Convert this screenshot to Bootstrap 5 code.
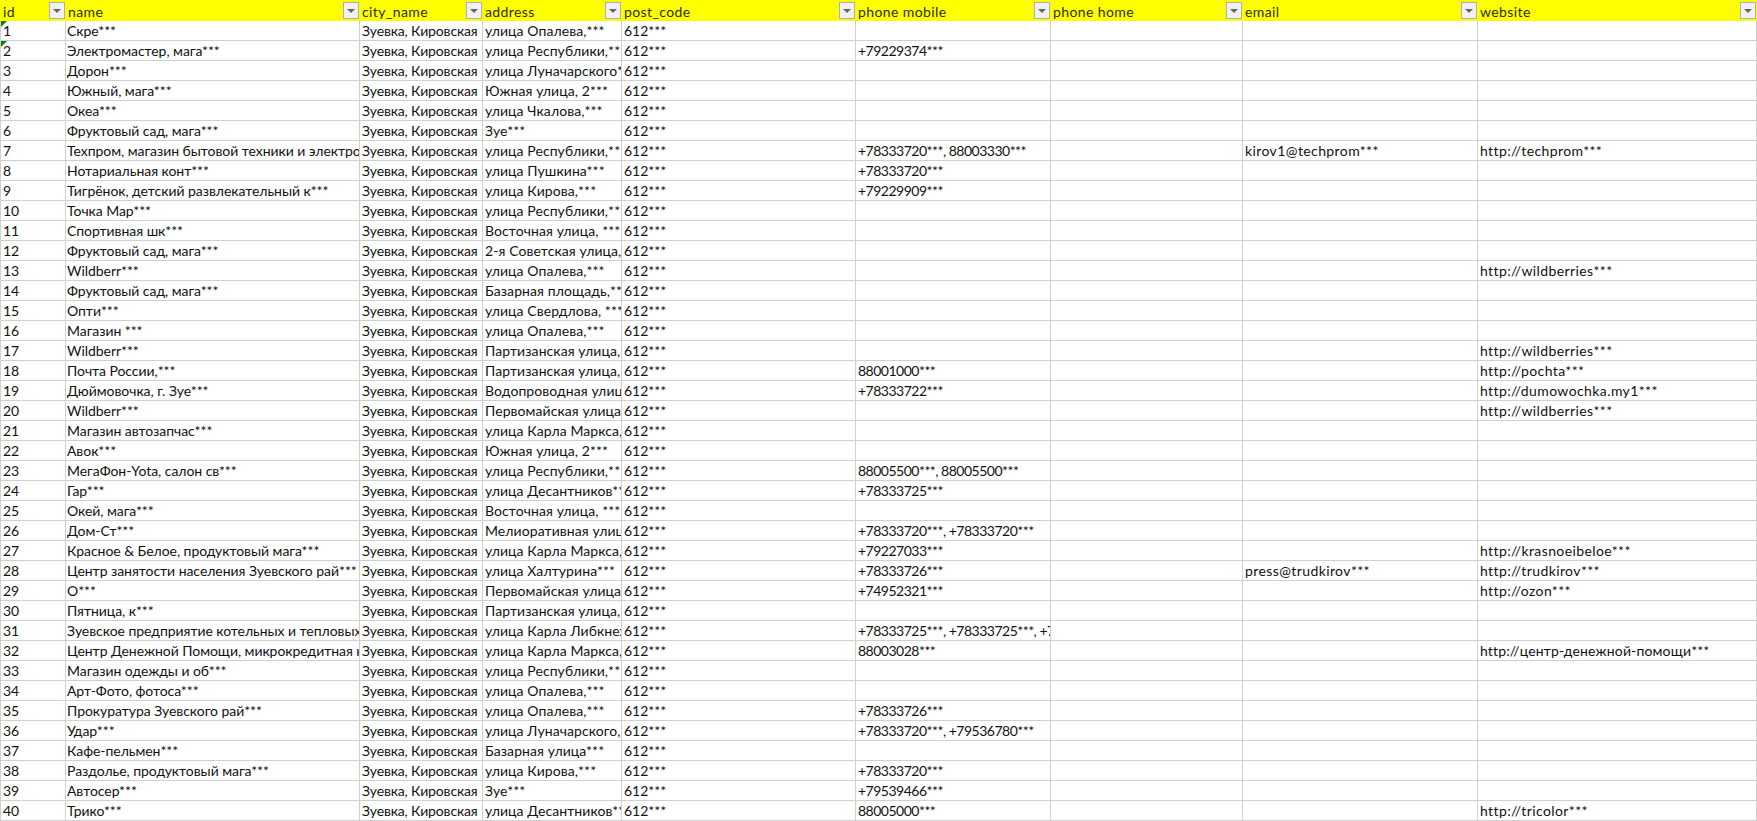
<!DOCTYPE html>
<html lang="ru">
<head>
<meta charset="utf-8">
<title>Sheet</title>
<link href="https://cdn.jsdelivr.net/npm/bootstrap@5.3.0/dist/css/bootstrap.min.css" rel="stylesheet">
<style>
html,body{margin:0;background:#fff;overflow:hidden}
.sheet{table-layout:fixed;width:1757px;border-collapse:separate;border-spacing:0;margin:0;font-family:"Lato","Noto Sans",sans-serif;font-size:14px;color:#111;--bs-table-bg:transparent;--bs-table-border-color:transparent}
.sheet th,.sheet td{padding:0 0 0 2px;height:20px;line-height:19px;white-space:nowrap;overflow:hidden;border:0;border-right:1px solid #d0d0d0;border-bottom:1px solid #d0d0d0;font-weight:400;box-shadow:none;color:#111}
.sheet thead th{background:#ff0;border-right:0;border-bottom:0;position:relative;height:21px;padding-left:3px;color:#2e2e00;letter-spacing:.4px}
.sheet thead th:nth-child(n+2){padding-left:2px}
.sheet td:first-child{border-left:1px solid #d0d0d0}
.sheet td:nth-child(2){padding-left:1px;letter-spacing:-.05px}
.sheet td:nth-child(3){letter-spacing:-.15px}
.sheet td:nth-child(4){letter-spacing:.08px}
.sheet td:nth-child(6){letter-spacing:-.5px}
.sheet td:nth-child(8),.sheet td:nth-child(9){letter-spacing:.4px}
.sheet td.mixed{letter-spacing:.15px}
.w1{width:66px}.w2{width:294px}.w3{width:123px}.w4{width:139px}.w5{width:234px}.w6{width:195px}.w7{width:192px}.w8{width:235px}.w9{width:279px}
.fbtn{position:absolute;right:1px;top:2px;width:16px;height:17px;border:1px solid #a8afc0;background:#f1f1f1;display:flex;align-items:center;justify-content:center;padding:0}
.fbtn::after{content:"";border-left:4px solid transparent;border-right:4px solid transparent;border-top:4px solid #666}
.flag{position:relative}
.flag::before{content:"";position:absolute;left:0;top:0;border-top:6px solid #107c10;border-right:6px solid transparent}
</style>
</head>
<body>
<table class="table sheet">
<colgroup><col class="w1"><col class="w2"><col class="w3"><col class="w4"><col class="w5"><col class="w6"><col class="w7"><col class="w8"><col class="w9"></colgroup>
<thead><tr>
<th>id<span class="fbtn"></span></th><th>name<span class="fbtn"></span></th><th>city_name<span class="fbtn"></span></th><th>address<span class="fbtn"></span></th><th>post_code<span class="fbtn"></span></th><th>phone mobile<span class="fbtn"></span></th><th>phone home<span class="fbtn"></span></th><th>email<span class="fbtn"></span></th><th>website<span class="fbtn"></span></th>
</tr></thead>
<tbody>
<tr><td class="flag">1</td><td>Скре***</td><td>Зуевка, Кировская</td><td>улица Опалева,***</td><td>612***</td><td></td><td></td><td></td><td></td></tr>
<tr><td class="flag">2</td><td>Электромастер, мага***</td><td>Зуевка, Кировская</td><td>улица Республики,***</td><td>612***</td><td>+79229374***</td><td></td><td></td><td></td></tr>
<tr><td>3</td><td>Дорон***</td><td>Зуевка, Кировская</td><td>улица Луначарского***</td><td>612***</td><td></td><td></td><td></td><td></td></tr>
<tr><td>4</td><td>Южный, мага***</td><td>Зуевка, Кировская</td><td>Южная улица, 2***</td><td>612***</td><td></td><td></td><td></td><td></td></tr>
<tr><td>5</td><td>Океа***</td><td>Зуевка, Кировская</td><td>улица Чкалова,***</td><td>612***</td><td></td><td></td><td></td><td></td></tr>
<tr><td>6</td><td>Фруктовый сад, мага***</td><td>Зуевка, Кировская</td><td>Зуе***</td><td>612***</td><td></td><td></td><td></td><td></td></tr>
<tr><td>7</td><td>Техпром, магазин бытовой техники и электроники</td><td>Зуевка, Кировская</td><td>улица Республики,***</td><td>612***</td><td>+78333720***, 88003330***</td><td></td><td>kirov1@techprom***</td><td>http://techprom***</td></tr>
<tr><td>8</td><td>Нотариальная конт***</td><td>Зуевка, Кировская</td><td>улица Пушкина***</td><td>612***</td><td>+78333720***</td><td></td><td></td><td></td></tr>
<tr><td>9</td><td>Тигрёнок, детский развлекательный к***</td><td>Зуевка, Кировская</td><td>улица Кирова,***</td><td>612***</td><td>+79229909***</td><td></td><td></td><td></td></tr>
<tr><td>10</td><td>Точка Мар***</td><td>Зуевка, Кировская</td><td>улица Республики,***</td><td>612***</td><td></td><td></td><td></td><td></td></tr>
<tr><td>11</td><td>Спортивная шк***</td><td>Зуевка, Кировская</td><td>Восточная улица, ***</td><td>612***</td><td></td><td></td><td></td><td></td></tr>
<tr><td>12</td><td>Фруктовый сад, мага***</td><td>Зуевка, Кировская</td><td>2-я Советская улица,***</td><td>612***</td><td></td><td></td><td></td><td></td></tr>
<tr><td>13</td><td>Wildberr***</td><td>Зуевка, Кировская</td><td>улица Опалева,***</td><td>612***</td><td></td><td></td><td></td><td>http://wildberries***</td></tr>
<tr><td>14</td><td>Фруктовый сад, мага***</td><td>Зуевка, Кировская</td><td>Базарная площадь,***</td><td>612***</td><td></td><td></td><td></td><td></td></tr>
<tr><td>15</td><td>Опти***</td><td>Зуевка, Кировская</td><td>улица Свердлова, ***</td><td>612***</td><td></td><td></td><td></td><td></td></tr>
<tr><td>16</td><td>Магазин ***</td><td>Зуевка, Кировская</td><td>улица Опалева,***</td><td>612***</td><td></td><td></td><td></td><td></td></tr>
<tr><td>17</td><td>Wildberr***</td><td>Зуевка, Кировская</td><td>Партизанская улица, ***</td><td>612***</td><td></td><td></td><td></td><td>http://wildberries***</td></tr>
<tr><td>18</td><td>Почта России,***</td><td>Зуевка, Кировская</td><td>Партизанская улица, ***</td><td>612***</td><td>88001000***</td><td></td><td></td><td>http://pochta***</td></tr>
<tr><td>19</td><td>Дюймовочка, г. Зуе***</td><td>Зуевка, Кировская</td><td>Водопроводная улица***</td><td>612***</td><td>+78333722***</td><td></td><td></td><td>http://dumowochka.my1***</td></tr>
<tr><td>20</td><td>Wildberr***</td><td>Зуевка, Кировская</td><td>Первомайская улица,***</td><td>612***</td><td></td><td></td><td></td><td>http://wildberries***</td></tr>
<tr><td>21</td><td>Магазин автозапчас***</td><td>Зуевка, Кировская</td><td>улица Карла Маркса, ***</td><td>612***</td><td></td><td></td><td></td><td></td></tr>
<tr><td>22</td><td>Авок***</td><td>Зуевка, Кировская</td><td>Южная улица, 2***</td><td>612***</td><td></td><td></td><td></td><td></td></tr>
<tr><td>23</td><td>МегаФон-Yota, салон св***</td><td>Зуевка, Кировская</td><td>улица Республики,***</td><td>612***</td><td>88005500***, 88005500***</td><td></td><td></td><td></td></tr>
<tr><td>24</td><td>Гар***</td><td>Зуевка, Кировская</td><td>улица Десантников***</td><td>612***</td><td>+78333725***</td><td></td><td></td><td></td></tr>
<tr><td>25</td><td>Окей, мага***</td><td>Зуевка, Кировская</td><td>Восточная улица, ***</td><td>612***</td><td></td><td></td><td></td><td></td></tr>
<tr><td>26</td><td>Дом-Ст***</td><td>Зуевка, Кировская</td><td>Мелиоративная улица***</td><td>612***</td><td>+78333720***, +78333720***</td><td></td><td></td><td></td></tr>
<tr><td>27</td><td>Красное &amp; Белое, продуктовый мага***</td><td>Зуевка, Кировская</td><td>улица Карла Маркса,***</td><td>612***</td><td>+79227033***</td><td></td><td></td><td>http://krasnoeibeloe***</td></tr>
<tr><td>28</td><td>Центр занятости населения Зуевского рай***</td><td>Зуевка, Кировская</td><td>улица Халтурина***</td><td>612***</td><td>+78333726***</td><td></td><td>press@trudkirov***</td><td>http://trudkirov***</td></tr>
<tr><td>29</td><td>О***</td><td>Зуевка, Кировская</td><td>Первомайская улица,***</td><td>612***</td><td>+74952321***</td><td></td><td></td><td>http://ozon***</td></tr>
<tr><td>30</td><td>Пятница, к***</td><td>Зуевка, Кировская</td><td>Партизанская улица,***</td><td>612***</td><td></td><td></td><td></td><td></td></tr>
<tr><td>31</td><td>Зуевское предприятие котельных и тепловых сетей</td><td>Зуевка, Кировская</td><td>улица Карла Либкнехта***</td><td>612***</td><td>+78333725***, +78333725***, +78333725***</td><td></td><td></td><td></td></tr>
<tr><td>32</td><td>Центр Денежной Помощи, микрокредитная компания</td><td>Зуевка, Кировская</td><td>улица Карла Маркса,***</td><td>612***</td><td>88003028***</td><td></td><td></td><td class="mixed">http://центр-денежной-помощи***</td></tr>
<tr><td>33</td><td>Магазин одежды и об***</td><td>Зуевка, Кировская</td><td>улица Республики,***</td><td>612***</td><td></td><td></td><td></td><td></td></tr>
<tr><td>34</td><td>Арт-Фото, фотоса***</td><td>Зуевка, Кировская</td><td>улица Опалева,***</td><td>612***</td><td></td><td></td><td></td><td></td></tr>
<tr><td>35</td><td>Прокуратура Зуевского рай***</td><td>Зуевка, Кировская</td><td>улица Опалева,***</td><td>612***</td><td>+78333726***</td><td></td><td></td><td></td></tr>
<tr><td>36</td><td>Удар***</td><td>Зуевка, Кировская</td><td>улица Луначарского, ***</td><td>612***</td><td>+78333720***, +79536780***</td><td></td><td></td><td></td></tr>
<tr><td>37</td><td>Кафе-пельмен***</td><td>Зуевка, Кировская</td><td>Базарная улица***</td><td>612***</td><td></td><td></td><td></td><td></td></tr>
<tr><td>38</td><td>Раздолье, продуктовый мага***</td><td>Зуевка, Кировская</td><td>улица Кирова,***</td><td>612***</td><td>+78333720***</td><td></td><td></td><td></td></tr>
<tr><td>39</td><td>Автосер***</td><td>Зуевка, Кировская</td><td>Зуе***</td><td>612***</td><td>+79539466***</td><td></td><td></td><td></td></tr>
<tr><td>40</td><td>Трико***</td><td>Зуевка, Кировская</td><td>улица Десантников***</td><td>612***</td><td>88005000***</td><td></td><td></td><td>http://tricolor***</td></tr>
</tbody>
</table>
<script src="https://cdn.jsdelivr.net/npm/bootstrap@5.3.0/dist/js/bootstrap.bundle.min.js"></script>
</body>
</html>
